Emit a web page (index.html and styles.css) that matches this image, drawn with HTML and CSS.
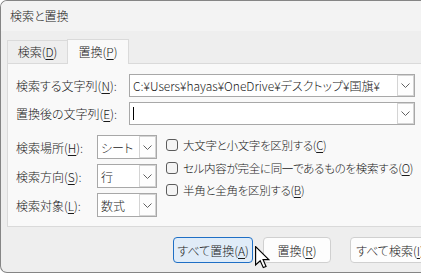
FILE: index.html
```html
<!DOCTYPE html>
<html lang="ja">
<head>
    <meta charset="UTF-8">
    <meta name="viewport" content="width=device-width, initial-scale=1.0">
    <title>検索と置換</title>
    <link rel="stylesheet" href="styles.css">
</head>
<body>
    <div class="window">
        <div class="titlebar">検索と置換</div>
        <div class="content">
            <div class="tabs">
                <div class="tab">検索(<u>D</u>)</div>
                <div class="tab active">置換(<u>P</u>)</div>
            </div>
            <div class="panel">
                <div class="field-row">
                    <label class="field-label">検索する文字列(<u>N</u>):</label>
                    <div class="combo wide">
                        <span class="combo-text">C:¥Users¥hayas¥OneDrive¥デスクトップ¥国旗¥</span>
                        <span class="drop"><svg width="9" height="5" viewBox="0 0 9 5"><path d="M0.5 0.5 L4.5 4.5 L8.5 0.5" /></svg></span>
                    </div>
                </div>
                <div class="field-row">
                    <label class="field-label">置換後の文字列(<u>E</u>):</label>
                    <div class="combo wide">
                        <span class="combo-text"><span class="caret"></span></span>
                        <span class="drop"><svg width="9" height="5" viewBox="0 0 9 5"><path d="M0.5 0.5 L4.5 4.5 L8.5 0.5" /></svg></span>
                    </div>
                </div>

                <div class="options">
                    <div class="selects">
                        <div class="select-row">
                            <label class="select-label">検索場所(<u>H</u>):</label>
                            <div class="combo small">
                                <span class="combo-text">シート</span>
                                <span class="drop"><svg width="9" height="5" viewBox="0 0 9 5"><path d="M0.5 0.5 L4.5 4.5 L8.5 0.5" /></svg></span>
                            </div>
                        </div>
                        <div class="select-row">
                            <label class="select-label">検索方向(<u>S</u>):</label>
                            <div class="combo small">
                                <span class="combo-text">行</span>
                                <span class="drop"><svg width="9" height="5" viewBox="0 0 9 5"><path d="M0.5 0.5 L4.5 4.5 L8.5 0.5" /></svg></span>
                            </div>
                        </div>
                        <div class="select-row">
                            <label class="select-label">検索対象(<u>L</u>):</label>
                            <div class="combo small">
                                <span class="combo-text">数式</span>
                                <span class="drop"><svg width="9" height="5" viewBox="0 0 9 5"><path d="M0.5 0.5 L4.5 4.5 L8.5 0.5" /></svg></span>
                            </div>
                        </div>
                    </div>
                    <div class="checks">
                        <div class="check"><span class="box"></span>大文字と小文字を区別する(<u>C</u>)</div>
                        <div class="check"><span class="box"></span>セル内容が完全に同一であるものを検索する(<u>O</u>)</div>
                        <div class="check"><span class="box"></span>半角と全角を区別する(<u>B</u>)</div>
                    </div>
                </div>
            </div>

            <div class="buttons">
                <button class="btn primary">すべて置換(<u>A</u>)</button>
                <button class="btn narrow">置換(<u>R</u>)</button>
                <button class="btn far">すべて検索(<u>I</u>)</button>
            </div>
        </div>
    </div>

    <svg class="cursor" width="15" height="23" viewBox="0 0 13 20">
        <path d="M0.5 0.5 L0.5 16.5 L4.5 12.8 L7.2 18.8 L9.6 17.8 L7 11.9 L12 11.9 Z" />
    </svg>
</body>
</html>
```

FILE: styles.css
```css
body {
    margin: 0;
    width: 421px;
    height: 273px;
    overflow: hidden;
    position: relative;
    background: #ffffff;
    font-family: "Noto Sans CJK JP", "Noto Sans", sans-serif;
    font-feature-settings: "palt";
    font-size: 12px;
    font-weight: 300;
    color: #1a1a1a;
}
u {
    text-decoration-thickness: 1px;
    text-underline-offset: 2px;
}
.window {
    width: 440px;
    height: 273px;
    box-sizing: border-box;
    border: 1px solid #858585;
    border-right: none;
    border-radius: 7px 0 0 7px;
    overflow: hidden;
    background: #eeeeee;
}
.titlebar {
    height: 30px;
    line-height: 30px;
    padding-left: 9px;
    background: #f3f3f3;
}
.content {
    padding: 8px 10px 0 6px;
}
.tabs {
    display: flex;
    align-items: flex-end;
    height: 24px;
}
.tab {
    box-sizing: border-box;
    width: 60px;
    height: 23px;
    line-height: 22px;
    text-align: center;
    border: 1px solid #dadada;
    border-bottom: none;
    border-right: none;
    background: #eeeeee;
}
.tab.active {
    width: 62px;
    height: 25px;
    line-height: 24px;
    border-right: 1px solid #dadada;
    background: #f9f9f9;
    margin-bottom: -1px;
    position: relative;
    z-index: 1;
}
.panel {
    background: #f9f9f9;
    border: 1px solid #dadada;
    padding: 10px 8px 9px 8px;
}
.field-row {
    display: flex;
    align-items: center;
    height: 23px;
}
.field-row + .field-row {
    margin-top: 5px;
}
.field-label {
    width: 113px;
}
.combo {
    box-sizing: border-box;
    display: flex;
    height: 100%;
    background: #ffffff;
    border: 1px solid #a8a8a8;
}
.combo.wide {
    width: 286px;
    height: 23px;
}
.combo.small {
    width: 60px;
    height: 24px;
}
.combo-text {
    flex: 1;
    display: flex;
    align-items: center;
    padding-left: 3px;
    white-space: nowrap;
    overflow: hidden;
}
.caret {
    width: 1px;
    height: 13px;
    background: #000000;
}
.drop {
    box-sizing: border-box;
    width: 17px;
    display: flex;
    align-items: center;
    justify-content: center;
    border: 1px solid #d4d4d4;
    background: #fdfdfd;
}
.drop svg path {
    fill: none;
    stroke: #606060;
    stroke-width: 1;
}
.options {
    display: flex;
    margin-top: 10px;
}
.selects {
    display: flex;
    flex-direction: column;
    gap: 5px;
}
.select-row {
    display: flex;
    align-items: center;
}
.select-label {
    width: 81px;
}
.checks {
    margin-left: 9px;
    margin-top: -1px;
    display: flex;
    flex-direction: column;
    font-size: 11.5px;
    letter-spacing: -0.3px;
}
.check {
    height: 22.5px;
    display: flex;
    align-items: center;
    white-space: nowrap;
}
.box {
    box-sizing: border-box;
    width: 12px;
    height: 12px;
    margin-right: 5px;
    border: 1px solid #5c5c5c;
    border-radius: 3px;
    background: #f4f4f4;
}
.buttons {
    display: flex;
    gap: 10px;
    padding-left: 166px;
    margin-top: 10px;
}
.btn {
    box-sizing: border-box;
    height: 26px;
    width: 88px;
    padding: 0;
    font-family: inherit;
    font-feature-settings: "palt";
    font-size: 12px;
    font-weight: 300;
    color: #1a1a1a;
    background: #fdfdfd;
    border: 1px solid #d0d0d0;
    border-radius: 4px;
    white-space: nowrap;
}
.btn.primary {
    background: #e0ecf8;
    border-color: #1f6fc5;
}
.btn.narrow {
    width: 74px;
}
.btn.far {
    margin-left: 9px;
}
.cursor {
    position: absolute;
    left: 255px;
    top: 246px;
}
.cursor path {
    fill: #ffffff;
    stroke: #000000;
    stroke-width: 1;
    stroke-linejoin: miter;
}
```
